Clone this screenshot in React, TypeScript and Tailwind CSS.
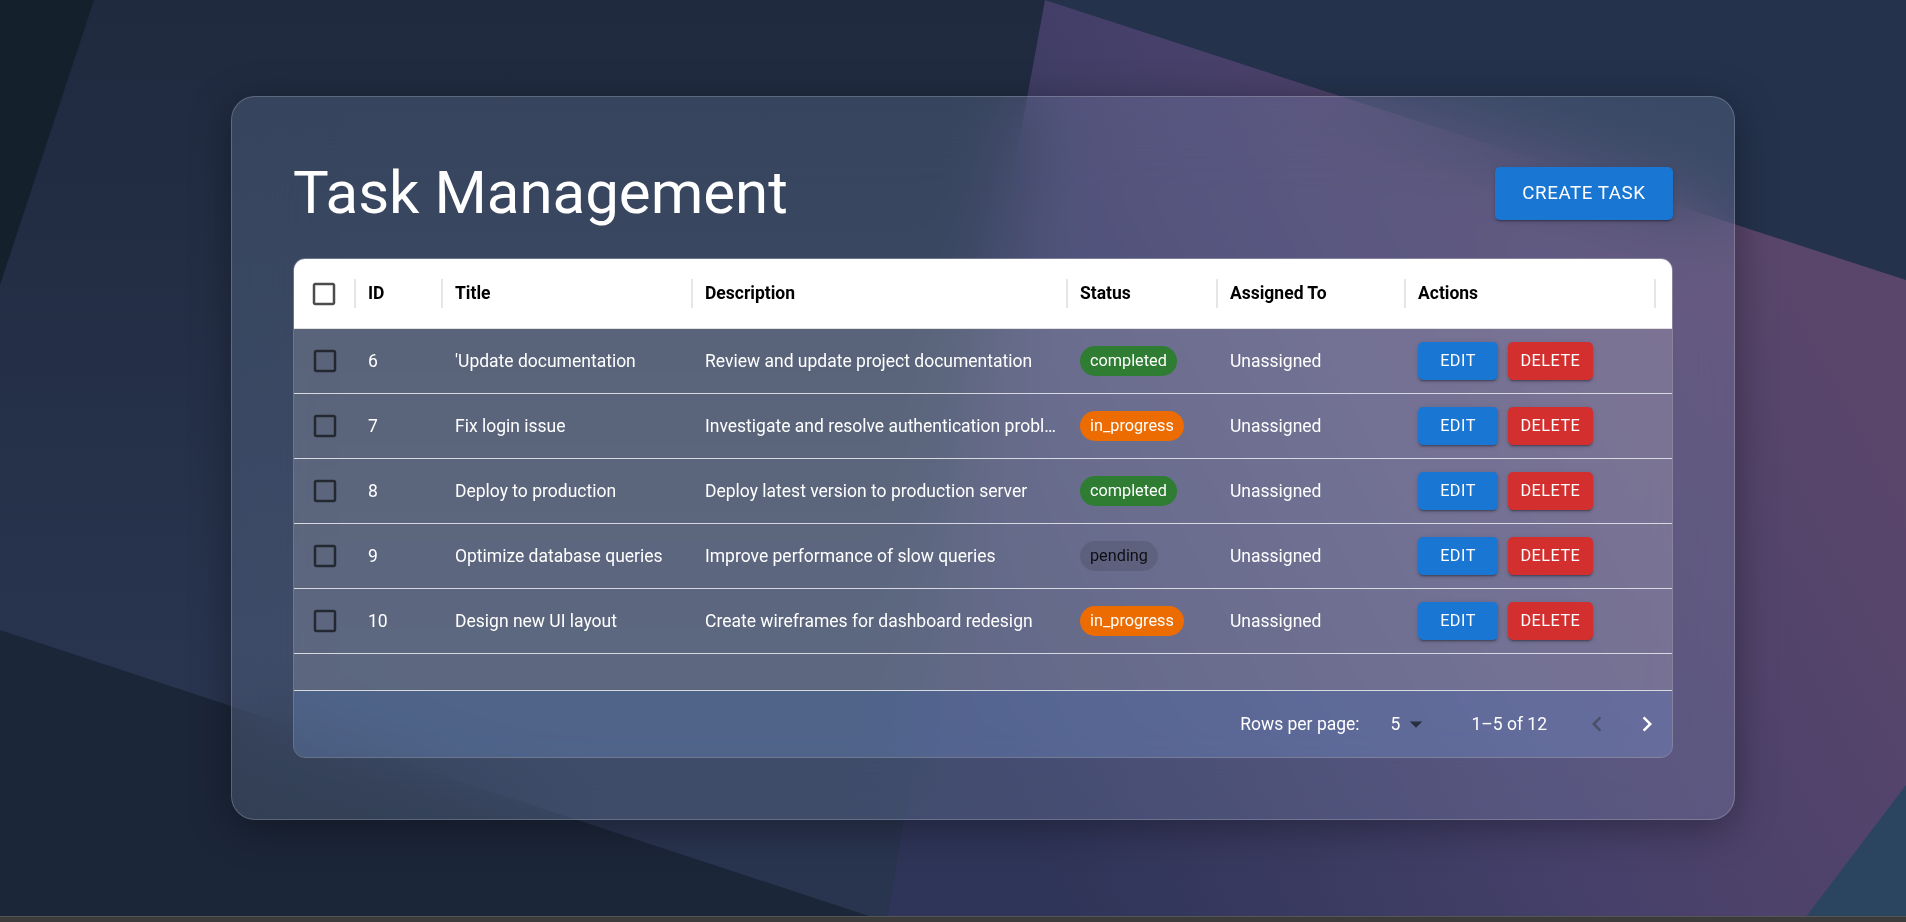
import React from "react";

type Task = {
  id: number;
  title: string;
  description: string;
  status: "completed" | "in_progress" | "pending";
  assignee: string;
};

const tasks: Task[] = [
  { id: 6, title: "'Update documentation", description: "Review and update project documentation", status: "completed", assignee: "Unassigned" },
  { id: 7, title: "Fix login issue", description: "Investigate and resolve authentication problems for users", status: "in_progress", assignee: "Unassigned" },
  { id: 8, title: "Deploy to production", description: "Deploy latest version to production server", status: "completed", assignee: "Unassigned" },
  { id: 9, title: "Optimize database queries", description: "Improve performance of slow queries", status: "pending", assignee: "Unassigned" },
  { id: 10, title: "Design new UI layout", description: "Create wireframes for dashboard redesign", status: "in_progress", assignee: "Unassigned" },
];

const chipStyles: Record<Task["status"], string> = {
  completed: "bg-[#2e7d32] text-white",
  in_progress: "bg-[#ed6c02] text-white",
  pending: "bg-black/10 text-black/85",
};

const btnShadow =
  "shadow-[0px_3px_1px_-2px_rgba(0,0,0,0.2),0px_2px_2px_0px_rgba(0,0,0,0.14),0px_1px_5px_0px_rgba(0,0,0,0.12)]";

function Checkbox({ className }: { className: string }) {
  return (
    <svg viewBox="0 0 24 24" className={`w-[30px] h-[30px] ${className}`} fill="currentColor">
      <path d="M19 5v14H5V5h14m0-2H5c-1.11 0-2 .9-2 2v14c0 1.1.89 2 2 2h14c1.1 0 2-.9 2-2V5c0-1.1-.9-2-2-2z" />
    </svg>
  );
}

function HeaderCell({ label, width }: { label: string; width: string }) {
  return (
    <div className={`${width} h-full flex items-center justify-between shrink-0`}>
      <span className="pl-[12px] font-bold text-black">{label}</span>
      <span className="w-[2px] h-[29px] bg-[#e6e6e6]" />
    </div>
  );
}

function Background() {
  return (
    <svg
      className="absolute inset-0 w-full h-full"
      viewBox="0 0 1906 922"
      preserveAspectRatio="none"
    >
      <defs>
        <linearGradient id="base" x1="0" y1="0" x2="0" y2="700" gradientUnits="userSpaceOnUse">
          <stop offset="0" stopColor="#1f2a3f" />
          <stop offset="1" stopColor="#29344f" />
        </linearGradient>
        <linearGradient id="purple" x1="950" y1="700" x2="1800" y2="250" gradientUnits="userSpaceOnUse">
          <stop offset="0" stopColor="#2f3558" />
          <stop offset="0.5" stopColor="#46406a" />
          <stop offset="1" stopColor="#5b466b" />
        </linearGradient>
      </defs>
      <rect width="1906" height="922" fill="url(#base)" />
      <polygon points="1045,0 1906,0 1906,280" fill="#24324c" />
      <polygon points="1045,0 1906,280 1906,922 887,922 990,300" fill="url(#purple)" />
      <polygon points="0,630 887,922 0,922" fill="#1c2639" />
      <polygon points="0,0 94,0 0,285" fill="#14202b" />
      <polygon points="1906,785 1906,922 1802,922" fill="#2b4560" />
    </svg>
  );
}

export default function App() {
  return (
    <div className="relative w-full h-[922px] overflow-hidden flex flex-col font-['Roboto',sans-serif]">
      <Background />
      <div className="relative flex-1 pt-[96px] pl-[231px]">
        <div className="w-[1504px] rounded-3xl border border-white/20 bg-[rgba(190,215,255,0.15)] backdrop-blur-2xl shadow-[0_8px_40px_rgba(0,0,0,0.35)] p-[61px]">
          <div className="flex items-center justify-between mb-[30px]">
            <h1 className="text-[60px] leading-[70px] font-normal text-white">Task Management</h1>
            <button className={`h-[53px] px-[27.5px] rounded-[5px] bg-[#1976d2] text-white text-[18.75px] font-normal tracking-[0.54px] uppercase ${btnShadow}`}>
              Create Task
            </button>
          </div>

          <div className="rounded-xl overflow-hidden border border-white/25 text-[17.5px]">
            <div className="h-[70px] flex items-center bg-white border-b border-[#e0e0e0]">
              <div className="w-[62px] h-full flex items-center justify-between shrink-0">
                <div className="flex-1 flex justify-center">
                  <Checkbox className="text-black/70" />
                </div>
                <span className="w-[2px] h-[29px] bg-[#e6e6e6]" />
              </div>
              <HeaderCell label="ID" width="w-[87px]" />
              <HeaderCell label="Title" width="w-[250px]" />
              <HeaderCell label="Description" width="w-[375px]" />
              <HeaderCell label="Status" width="w-[150px]" />
              <HeaderCell label="Assigned To" width="w-[188px]" />
              <HeaderCell label="Actions" width="w-[250px]" />
            </div>

            <div className="bg-white/[0.16]">
              {tasks.map((t) => (
                <div key={t.id} className="h-[65px] flex items-center border-b border-[#d6d9e0] text-white">
                  <div className="w-[62px] flex justify-center shrink-0">
                    <Checkbox className="text-black/60" />
                  </div>
                  <div className="w-[87px] px-[12px] shrink-0">{t.id}</div>
                  <div className="w-[250px] px-[12px] shrink-0 truncate">{t.title}</div>
                  <div className="w-[375px] px-[12px] shrink-0 truncate">{t.description}</div>
                  <div className="w-[150px] px-[12px] shrink-0">
                    <span className={`inline-flex items-center h-[30px] px-[10px] rounded-full text-[16.25px] ${chipStyles[t.status]}`}>
                      {t.status}
                    </span>
                  </div>
                  <div className="w-[188px] px-[12px] shrink-0">{t.assignee}</div>
                  <div className="w-[250px] px-[12px] shrink-0 flex gap-[10px]">
                    <button className={`h-[38px] min-w-[80px] px-[12.5px] rounded-[5px] bg-[#1976d2] text-white text-[16.25px] font-normal tracking-[0.46px] ${btnShadow}`}>
                      EDIT
                    </button>
                    <button className={`h-[38px] min-w-[80px] px-[12.5px] rounded-[5px] bg-[#d32f2f] text-white text-[16.25px] font-normal tracking-[0.46px] ${btnShadow}`}>
                      DELETE
                    </button>
                  </div>
                </div>
              ))}
              <div className="h-[37px] border-b border-[#d6d9e0]" />
            </div>

            <div className="h-[66px] flex items-center justify-end bg-[rgba(130,170,240,0.25)] text-white">
              <span>Rows per page:</span>
              <span className="ml-[31px]">5</span>
              <svg viewBox="0 0 24 24" className="w-[30px] h-[30px] ml-[1px] text-[#2a2f40]" fill="currentColor">
                <path d="M7 10l5 5 5-5z" />
              </svg>
              <span className="ml-[40px]">1–5 of 12</span>
              <div className="ml-[25px] flex">
                <span className="w-[50px] h-[50px] flex items-center justify-center text-[#4a5068]">
                  <svg viewBox="0 0 24 24" className="w-[30px] h-[30px]" fill="currentColor">
                    <path d="M15.41 16.59 10.83 12l4.58-4.59L14 6l-6 6 6 6 1.41-1.41z" />
                  </svg>
                </span>
                <span className="w-[50px] h-[50px] flex items-center justify-center text-white">
                  <svg viewBox="0 0 24 24" className="w-[30px] h-[30px]" fill="currentColor">
                    <path d="M8.59 16.59 13.17 12 8.59 7.41 10 6l6 6-6 6-1.41-1.41z" />
                  </svg>
                </span>
              </div>
            </div>
          </div>
        </div>
      </div>
      <div className="relative h-[6px] bg-[#3c3c3c] border-t border-[#555]" />
    </div>
  );
}
